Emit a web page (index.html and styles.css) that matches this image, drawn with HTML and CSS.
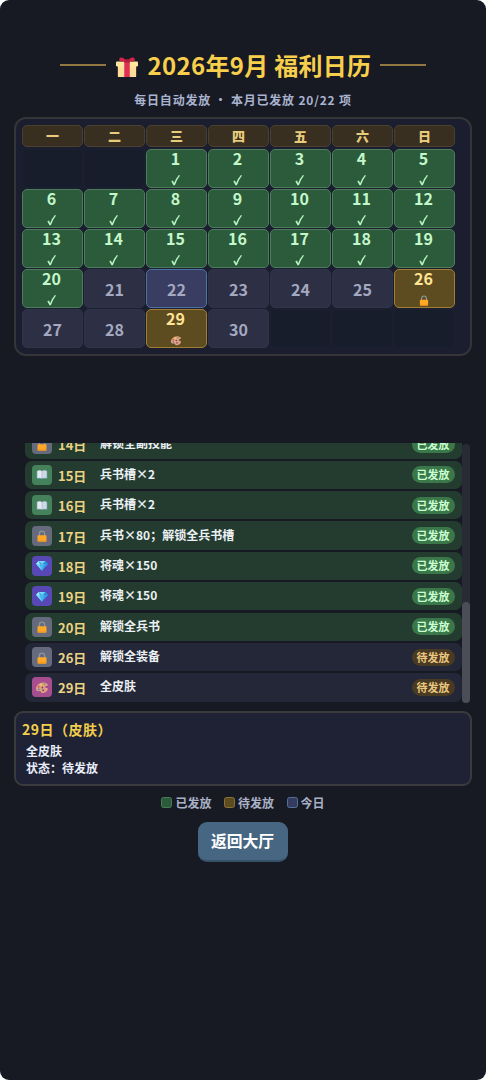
FILE: index.html
```html
<!DOCTYPE html>
<html lang="zh-CN">
<head>
<meta charset="utf-8">
<title>福利日历</title>
<link rel="stylesheet" href="styles.css">
</head>
<body>
<svg class="defs" width="0" height="0">
  <symbol id="gift" viewBox="0 0 24 24">
    <path d="M2 10h20v12q0 1-1 1H3q-1 0-1-1z" fill="#ffdc98"/>
    <path d="M1 6h22q1 0 1 1v3q0 1.500-1.500 1.500h-21Q0 11.500 0 10V7q0-1 1-1z" fill="#ffe7a0"/>
    <path d="M9 6h6v17H9z" fill="#df2f55"/>
    <path d="M11.500 6C9 1 4 .5 3.500 3.500 3.300 5 4 6 6 6zM12.500 6C15 1 20 .5 20.500 3.500 20.700 5 20 6 18 6z" fill="#cf2446"/>
    <path d="M9 3.500h6V7H9z" fill="#b51d3d"/>
  </symbol>
  <symbol id="lock" viewBox="0 0 16 16">
    <path d="M4.500 8V5a3.500 3.500 0 0 1 7 0v3" fill="none" stroke="#8d949c" stroke-width="1.700"/>
    <rect x="2" y="7" width="12" height="8.500" rx="1" fill="#ffa827"/>
    <path d="M2.500 14.500h11" stroke="#eb8f1d"/>
  </symbol>
  <symbol id="book" viewBox="0 0 16 16">
    <path d="M1 3.500h14v10H1z" fill="#78a7b8"/>
    <path d="M1.800 3Q5 1.500 8 3.300V13Q5 11.500 1.800 12.800z" fill="#e5e9f4"/>
    <path d="M14.200 3Q11 1.500 8 3.300V13q3-1.500 6.200-.2z" fill="#cfd9e6"/>
    <path d="M8 3.300V13" stroke="#9baabd" stroke-width=".7"/>
  </symbol>
  <symbol id="gem" viewBox="0 0 16 16">
    <path d="M3.500 2h9L16 6l-8 9L0 6z" fill="#379be6"/>
    <path d="M3.500 2L8 6l4.500-4zM0 6h5l3 9z" fill="#75d5fa"/>
    <path d="M3.500 2L5 6H0z" fill="#b0edff"/>
    <path d="M12.500 2L11 6h5z" fill="#238bd0"/>
    <path d="M5 6h6l-3 9z" fill="#46b8f2"/>
  </symbol>
  <symbol id="palette" viewBox="0 0 16 16">
    <path d="M15 4C12 1 6 1 2.500 5-.8 9 .5 13 4 12.500c2-.3 2.500.5 3 1.500 1.500 1.800 6 .5 7.700-2.500 1-2 .5-3-1.200-3s-2.500-1.500-.5-2.300c2-.4 2.700-1.200 2-2.200z" fill="#dfa182"/>
    <circle cx="4" cy="7" r="1.200" fill="#e24b59"/>
    <circle cx="7" cy="4.500" r="1.200" fill="#f2d35c"/>
    <circle cx="11" cy="3.800" r="1.100" fill="#5e9a68"/>
    <circle cx="4" cy="10.300" r="1.100" fill="#467fbf"/>
    <circle cx="9.500" cy="11.500" r="1.200" fill="#7f4a78"/>
    <circle cx="8.500" cy="8" r="1.100" fill="#754b45"/>
  </symbol>
  <symbol id="check" viewBox="0 0 10 12">
    <path d="M.8 7.300l1.500-.8 1.400 2.500Q5.500 4.200 8.400 1l1.100.4Q6.300 5.500 4.400 11.200H3z" fill="#b5f5bf"/>
  </symbol>
</svg>
<main class="app">
  <header class="head">
    <div class="title-row"><i class="rule"></i><svg class="gift"><use href="#gift"/></svg><h1>2026年9月 福利日历</h1><i class="rule"></i></div>
    <p class="sub">每日自动发放 • 本月已发放 20/22 项</p>
  </header>

  <section class="calendar">
    <div class="week"><b>一</b><b>二</b><b>三</b><b>四</b><b>五</b><b>六</b><b>日</b></div>
    <div class="days">
      <div class="day blank"></div><div class="day blank"></div>
      <div class="day done">1<svg><use href="#check"/></svg></div>
      <div class="day done">2<svg><use href="#check"/></svg></div>
      <div class="day done">3<svg><use href="#check"/></svg></div>
      <div class="day done">4<svg><use href="#check"/></svg></div>
      <div class="day done">5<svg><use href="#check"/></svg></div>
      <div class="day done">6<svg><use href="#check"/></svg></div>
      <div class="day done">7<svg><use href="#check"/></svg></div>
      <div class="day done">8<svg><use href="#check"/></svg></div>
      <div class="day done">9<svg><use href="#check"/></svg></div>
      <div class="day done">10<svg><use href="#check"/></svg></div>
      <div class="day done">11<svg><use href="#check"/></svg></div>
      <div class="day done">12<svg><use href="#check"/></svg></div>
      <div class="day done">13<svg><use href="#check"/></svg></div>
      <div class="day done">14<svg><use href="#check"/></svg></div>
      <div class="day done">15<svg><use href="#check"/></svg></div>
      <div class="day done">16<svg><use href="#check"/></svg></div>
      <div class="day done">17<svg><use href="#check"/></svg></div>
      <div class="day done">18<svg><use href="#check"/></svg></div>
      <div class="day done">19<svg><use href="#check"/></svg></div>
      <div class="day done">20<svg><use href="#check"/></svg></div>
      <div class="day">21</div>
      <div class="day today">22</div>
      <div class="day">23</div>
      <div class="day">24</div>
      <div class="day">25</div>
      <div class="day wait">26<svg><use href="#lock"/></svg></div>
      <div class="day">27</div>
      <div class="day">28</div>
      <div class="day wait">29<svg><use href="#palette"/></svg></div>
      <div class="day">30</div>
      <div class="day blank"></div><div class="day blank"></div><div class="day blank"></div>
    </div>
  </section>

  <section class="list-area">
    <div class="list">
      <div class="row sent"><span class="icon lock"><svg><use href="#lock"/></svg></span><span class="date">14日</span><span class="name">解锁全副技能</span><span class="pill">已发放</span></div>
      <div class="row sent"><span class="icon book"><svg><use href="#book"/></svg></span><span class="date">15日</span><span class="name">兵书槽×2</span><span class="pill">已发放</span></div>
      <div class="row sent"><span class="icon book"><svg><use href="#book"/></svg></span><span class="date">16日</span><span class="name">兵书槽×2</span><span class="pill">已发放</span></div>
      <div class="row sent"><span class="icon lock"><svg><use href="#lock"/></svg></span><span class="date">17日</span><span class="name">兵书×80；解锁全兵书槽</span><span class="pill">已发放</span></div>
      <div class="row sent"><span class="icon gem"><svg><use href="#gem"/></svg></span><span class="date">18日</span><span class="name">将魂×150</span><span class="pill">已发放</span></div>
      <div class="row sent"><span class="icon gem"><svg><use href="#gem"/></svg></span><span class="date">19日</span><span class="name">将魂×150</span><span class="pill">已发放</span></div>
      <div class="row sent"><span class="icon lock"><svg><use href="#lock"/></svg></span><span class="date">20日</span><span class="name">解锁全兵书</span><span class="pill">已发放</span></div>
      <div class="row"><span class="icon lock"><svg><use href="#lock"/></svg></span><span class="date">26日</span><span class="name">解锁全装备</span><span class="pill">待发放</span></div>
      <div class="row"><span class="icon palette"><svg><use href="#palette"/></svg></span><span class="date">29日</span><span class="name">全皮肤</span><span class="pill">待发放</span></div>
    </div>
    <div class="track"><div class="thumb"></div></div>
  </section>

  <section class="detail">
    <h2>29日（皮肤）</h2>
    <p>全皮肤</p>
    <p>状态：待发放</p>
  </section>

  <div class="legend">
    <span><i class="key green"></i>已发放</span>
    <span><i class="key gold"></i>待发放</span>
    <span><i class="key blue"></i>今日</span>
  </div>
  <button class="back">返回大厅</button>
</main>
</body>
</html>
```
FILE: styles.css
```css
* { box-sizing: border-box; }
body {
  margin: 0;
  background: #fff;
  font-family: "Noto Sans CJK SC", sans-serif;
  font-weight: 700;
}
h1, h2, p { margin: 0; }
svg { display: block; flex: none; }
.defs { position: absolute; }
.app {
  display: flex;
  flex-direction: column;
  align-items: center;
  width: 486px;
  height: 1080px;
  padding: 48px 15px 0;
  overflow: hidden;
  border-radius: 9px;
  background: #171a23;
}

.head { display: flex; flex-direction: column; align-items: center; height: 69px; }
.title-row { display: flex; align-items: center; height: 34px; }
.rule { width: 46px; height: 2px; background: #927743; }
.gift { width: 22px; height: 22px; margin: 3px 10px 0; }
h1 {
  margin-right: 9px;
  color: #f8cf4c;
  font-size: 24px;
  line-height: 34px;
  letter-spacing: .3px;
  white-space: nowrap;
}
.sub {
  margin-top: 9px;
  color: #a9b3cf;
  font-size: 12px;
  line-height: 18px;
  letter-spacing: .8px;
  white-space: nowrap;
}

.calendar {
  width: 458px;
  height: 239px;
  padding: 6px 15px 0 6px;
  border: 2px solid #353438;
  border-radius: 12px;
  background: #1a1e2f;
}
.week, .days { display: grid; grid-template-columns: repeat(7, 1fr); gap: 1px; }
.week { margin-bottom: 2px; }
.week b {
  height: 22px;
  border: 1px solid #4b402f;
  border-radius: 5px;
  background: #382f20;
  color: #e8cb7b;
  font-size: 13px;
  line-height: 20px;
  text-align: center;
}
.days { grid-auto-rows: 39.100px; }
.day {
  display: flex;
  flex-direction: column;
  align-items: center;
  justify-content: center;
  border: 1px solid #303449;
  border-radius: 5px;
  background: #2d3044;
  color: #a4a8c0;
  font-size: 16px;
  line-height: 20px;
}
.day.blank { border-color: #1b2031; background: #181d2b; }
.day.done, .day.wait { justify-content: flex-start; padding-right: 2px; line-height: 17px; }
.day.done { border-color: #4d7d5c; background: #2b5b3b; color: #c3f7ca; }
.day.wait { border-color: #a17e34; background: #5e4c21; color: #ffe494; }
.day.today { border-color: #4c73a5; background: #393d62; }
.day svg { width: 12px; height: 11px; margin-top: 8px; }
.day.done svg { width: 11px; height: 12px; margin-top: 7px; }

.list-area {
  display: flex;
  align-self: flex-start;
  height: 261.500px;
  margin: 86.500px 0 0 10px;
}
.list {
  display: flex;
  flex: none;
  flex-direction: column;
  justify-content: flex-end;
  gap: 2.200px;
  width: 436.500px;
  height: 259px;
  overflow: hidden;
}
.row {
  display: flex;
  flex: none;
  align-items: center;
  height: 28.200px;
  padding: 0 7px;
  border-radius: 7px;
  background: #232737;
}
.row.sent { background: #233c2f; }
.icon { display: grid; place-items: center; width: 20px; height: 20px; border-radius: 4px; }
.icon svg { width: 12px; height: 13px; }
.icon.lock { background: #656a7c; }
.icon.lock svg { width: 12px; height: 14px; margin-top: 1px; }
.icon.book { background: #45815b; }
.icon.gem { background: #5748b5; }
.icon.palette { background: #a74e91; }
.icon.palette svg { width: 14px; }
.date { width: 48px; padding: 2px 0 0 6px; color: #ecd384; font-size: 13px; line-height: 20px; }
.name { flex: 1; padding-bottom: 2px; color: #ebf0f4; font-size: 12px; line-height: 18px; }
.pill {
  width: 43px;
  height: 17px;
  border-radius: 9px;
  background: #493a23;
  color: #eac77e;
  font-size: 11px;
  line-height: 16px;
  text-align: center;
}
.sent .pill { background: #3a7849; color: #caffd1; }
.track {
  display: flex;
  align-items: flex-end;
  width: 8.500px;
  height: 259px;
  margin-top: 1.500px;
  border-radius: 4px;
  background: #282b35;
  flex: none;
}
.thumb { width: 100%; height: 101.500px; border-radius: 4px; background: #4b4e57; }

.detail {
  width: 458px;
  height: 75px;
  margin-top: 7px;
  padding: 7px 6px;
  border: 2px solid #3b3b3e;
  border-radius: 9px;
  background: #1e2234;
}
h2 { color: #f3cd4d; font-size: 14px; line-height: 19px; letter-spacing: .5px; }
.detail p { padding-left: 4px; color: #e9edfa; font-size: 12px; line-height: 17px; }
.detail h2 + p { margin-top: 3px; }

.legend {
  display: flex;
  gap: 12.500px;
  margin-top: 7.500px;
  color: #a9b1c6;
  font-size: 12px;
  line-height: 18px;
}
.legend span { display: flex; align-items: center; gap: 3px; }
.key { width: 11px; height: 11px; border: 1px solid; border-radius: 2.500px; }
.green { border-color: #437e50; background: #2b5b3b; }
.gold { border-color: #8a7037; background: #5e4c21; }
.blue { border-color: #536f9e; background: #343b5e; }
.back {
  width: 90px;
  height: 40px;
  margin-top: 10.500px;
  padding: 0 1px 1px 0;
  border: 0;
  border-bottom: 2px solid #365269;
  border-radius: 9px;
  background: #466681;
  color: #fff;
  font: 700 15.800px/24px "Noto Sans CJK SC", sans-serif;
}
```
